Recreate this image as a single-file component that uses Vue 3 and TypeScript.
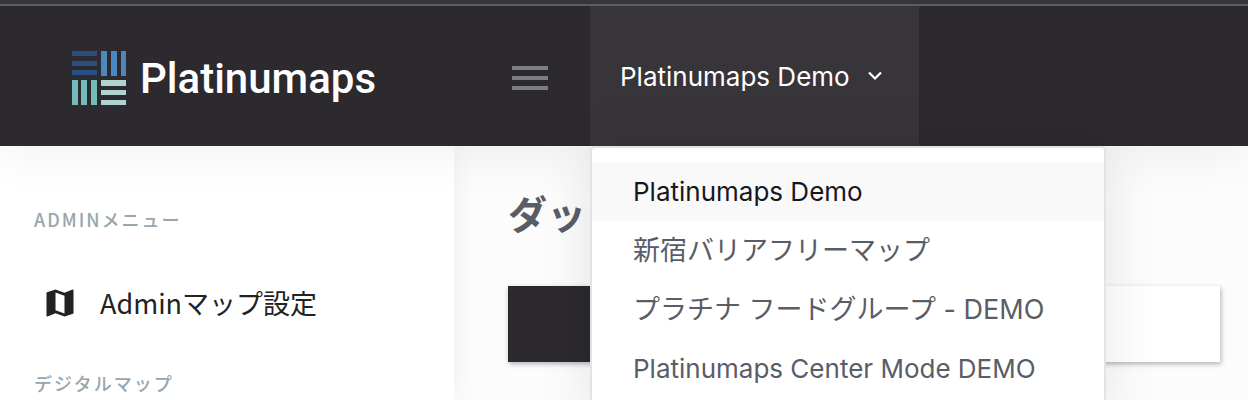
<script setup lang="ts">
import { ref } from 'vue'

interface Project {
  name: string
  ja?: boolean
}

const projects: Project[] = [
  { name: 'Platinumaps Demo' },
  { name: '新宿バリアフリーマップ', ja: true },
  { name: 'プラチナ フードグループ - DEMO', ja: true },
  { name: 'Platinumaps Center Mode DEMO' },
]
const current = ref(projects[0].name)
const open = ref(true)

function choose(name: string): void {
  current.value = name
  open.value = false
}
</script>

<template>
  <div class="page">
    <header class="topbar">
      <a class="brand" href="#">
        <svg class="mark" viewBox="0 0 54 54" aria-hidden="true">
          <path fill="#2b4f80" d="M0 0h25v5H0zM0 10h25v5H0zM0 19h25v5H0z" />
          <path fill="#4b88c0" d="M29 0h6v25h-6zM39 0h6v25h-6zM49 0h5v25h-5z" />
          <path fill="#73bcbb" d="M0 29h6v25H0zM9 29h6v25H9zM19 29h6v25h-6z" />
          <path fill="#b0d3d2" d="M29 29h25v6H29zM29 39h25v5H29zM29 49h25v5H29z" />
        </svg>
        <span>Platinumaps</span>
      </a>
      <button class="burger" type="button" aria-label="Menu"><i></i><i></i><i></i></button>
      <div class="picker">
        <button class="tab" type="button" :aria-expanded="open" @click="open = !open">
          <span>{{ current }}</span>
          <svg class="chevron" viewBox="0 0 14 10" aria-hidden="true">
            <path d="M1 1.5L7 7.5L13 1.5" fill="none" stroke="#fff" stroke-width="2.2" />
          </svg>
        </button>
        <ul v-if="open" class="menu">
          <li v-for="p in projects" :key="p.name">
            <a
              href="#"
              :class="{ active: p.name === current, ja: p.ja }"
              @click.prevent="choose(p.name)"
            >{{ p.name }}</a>
          </li>
        </ul>
      </div>
    </header>

    <div class="body">
      <nav class="sidebar">
        <h2>ADMINメニュー</h2>
        <a class="entry" href="#">
          <svg viewBox="0 0 24 24" aria-hidden="true">
            <path
              fill="#222"
              d="M15 19l-6-2.11V5l6 2.11M20.5 3h-.16L15 5.1 9 3 3.36 4.9c-.21.07-.36.25-.36.48V20.5c0 .28.22.5.5.5h.16L9 18.9l6 2.1 5.64-1.9c.21-.07.36-.25.36-.48V3.5c0-.28-.22-.5-.5-.5z"
            />
          </svg>
          <span>Adminマップ設定</span>
        </a>
        <h2>デジタルマップ</h2>
      </nav>
      <main class="content">
        <h1>ダッ</h1>
        <section class="card"><div class="card-head"></div></section>
      </main>
    </div>
  </div>
</template>

<style>
body {
  margin: 0;
}
</style>

<style scoped>
.page {
  display: flex;
  flex-direction: column;
  min-height: 100vh;
  box-sizing: border-box;
  overflow: hidden;
  border-top: 4px solid #36373b;
  background: #fcfcfc;
  font-family: Inter, 'Noto Sans CJK JP', sans-serif;
  color: #595d67;
}
a {
  color: inherit;
  text-decoration: none;
}
button {
  border: 0;
  padding: 0;
  background: none;
  font: inherit;
  color: inherit;
  cursor: pointer;
}
.topbar {
  position: relative;
  z-index: 2;
  display: flex;
  height: 140px;
  border-top: 2px solid #5c5e62;
  background: #2c292f;
  box-shadow: 0 0 56px rgba(0, 0, 0, 0.08);
}
.brand {
  display: flex;
  align-items: center;
  gap: 14px;
  flex: 0 0 454px;
  box-sizing: border-box;
  padding: 4px 0 0 72px;
  font-family: Roboto, sans-serif;
  font-size: 42px;
  font-weight: 500;
  color: #fff;
}
.mark {
  width: 54px;
  height: 54px;
}
.burger {
  display: flex;
  flex-direction: column;
  justify-content: center;
  gap: 6px;
  width: 36px;
  margin: 4px 42px 0 58px;
}
.burger i {
  height: 4px;
  background: #7f7e7f;
}
.picker {
  position: relative;
}
.tab {
  display: flex;
  align-items: center;
  gap: 18px;
  height: 100%;
  padding: 0 37px 0 30px;
  background: #38353a;
  font-size: 26px;
  color: #fff;
}
.chevron {
  width: 14px;
  height: 10px;
}
.menu {
  position: absolute;
  top: 100%;
  left: 0;
  width: 512px;
  margin: 0;
  padding: 14px 0;
  border: 2px solid #e0e3e8;
  border-radius: 5px;
  background: #fff;
  box-shadow: 0 0 56px rgba(0, 0, 0, 0.1);
  list-style: none;
  font-size: 26px;
}
.menu a {
  display: block;
  padding: 0 41px;
  line-height: 59px;
  white-space: nowrap;
}
.menu .ja {
  font-size: 27px;
}
.menu .active {
  background: #f9f9f9;
  color: #16181b;
}
.body {
  display: flex;
  flex: 1;
}
.sidebar {
  position: relative;
  flex: 0 0 454px;
  box-sizing: border-box;
  padding-top: 60px;
  background: #fff;
  box-shadow: 0 0 28px rgba(0, 0, 0, 0.06);
  font-family: 'Noto Sans CJK JP', sans-serif;
}
.sidebar h2 {
  margin: 0 0 0 34px;
  font-size: 18px;
  line-height: 26px;
  font-weight: 500;
  letter-spacing: 2px;
  color: #98a6ad;
}
.entry {
  display: flex;
  align-items: center;
  gap: 22px;
  height: 60px;
  margin: 41px 0 37px;
  padding-left: 42px;
  font-size: 27px;
  line-height: 38px;
  color: #222;
}
.entry svg {
  width: 36px;
  height: 36px;
}
.content {
  flex: 1;
  min-width: 0;
  padding: 40px 28px 38px 54px;
}
h1 {
  margin: 0 0 42px;
  font-size: 39px;
  line-height: 58px;
  font-weight: 700;
}
.card {
  display: flex;
  height: 76px;
  background: #fff;
  box-shadow: 1px 2px 5px rgba(0, 0, 0, 0.3);
}
.card-head {
  width: 25%;
  background: #2c292f;
}
</style>
